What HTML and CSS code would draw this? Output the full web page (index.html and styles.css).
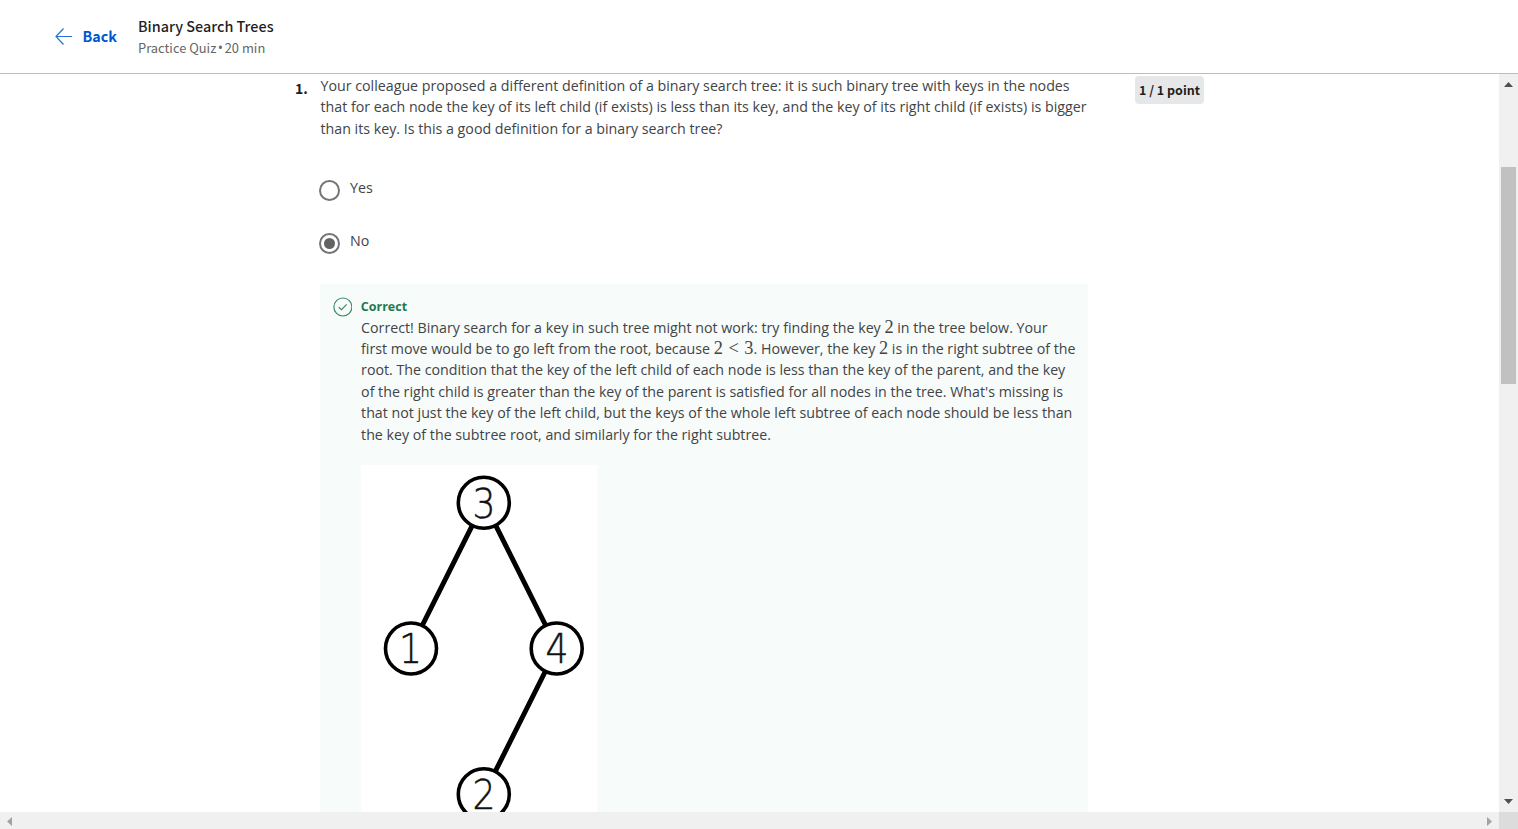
FILE: index.html
```
<!DOCTYPE html>
<html lang="en">
<head>
<meta charset="utf-8">
<title>Binary Search Trees</title>
<link rel="stylesheet" href="styles.css">
</head>
<body>
<header class="header">
  <a class="back"><svg class="back-arrow" width="18" height="18" viewBox="0 0 18 18"><path d="M17 8.500H1M8.500 0.500L1 8.500l7.500 8"/></svg><span>Back</span></a>
  <div class="heading">
    <h1 class="title">Binary Search Trees</h1>
    <p class="subtitle">Practice Quiz <span class="dot">•</span> 20 min</p>
  </div>
</header>
<div class="viewport">
  <main class="content">
    <div class="number">1.</div>
    <section class="question">
      <p class="prompt">Your colleague proposed a different definition of a binary search tree: it is such binary tree with keys in the nodes<br>that for each node the key of its left child (if exists) is less than its key, and the key of its right child (if exists) is bigger<br>than its key. Is this a good definition for a binary search tree?</p>
      <div class="options">
        <div class="option"><span class="radio"></span><span class="label">Yes</span></div>
        <div class="option"><span class="radio checked"></span><span class="label">No</span></div>
      </div>
      <div class="feedback">
        <svg class="check" width="20" height="20" viewBox="0 0 20 20"><circle cx="10" cy="10" r="9.1"/><path d="M5.800 10.200l2.800 2.500 5.200-5.400"/></svg>
        <div class="feedback-body">
          <h2 class="verdict">Correct</h2>
          <p class="explanation">Correct! Binary search for a key in such tree might not work: try finding the key <span class="math">2</span> in the tree below. Your<br>first move would be to go left from the root, because <span class="math">2 <span class="less">&lt;</span> 3</span>. However, the key <span class="math">2</span> is in the right subtree of the<br>root. The condition that the key of the left child of each node is less than the key of the parent, and the key<br>of the right child is greater than the key of the parent is satisfied for all nodes in the tree. What's missing is<br>that not just the key of the left child, but the keys of the whole left subtree of each node should be less than<br>the key of the subtree root, and similarly for the right subtree.</p>
          <svg class="tree" width="236" height="370" viewBox="0 0 236 370">
            <g class="edges"><path d="M123 37L50 183M123 37l73 146M196 183l-73 146"/></g>
            <g class="nodes"><circle cx="122.800" cy="37.800" r="25.500"/><circle cx="50" cy="183.500" r="25.500"/><circle cx="195.700" cy="183.500" r="25.500"/><circle cx="122.800" cy="329.300" r="25.500"/></g>
            <g class="keys"><text x="123" y="53" textLength="23" lengthAdjust="spacingAndGlyphs">3</text><text x="49.500" y="198" textLength="23" lengthAdjust="spacingAndGlyphs">1</text><text x="196" y="198" textLength="23" lengthAdjust="spacingAndGlyphs">4</text><text x="123" y="344" textLength="23" lengthAdjust="spacingAndGlyphs">2</text></g>
          </svg>
        </div>
      </div>
    </section>
    <div class="points">1 / 1 point</div>
  </main>
  <div class="vbar">
    <svg width="9" height="5" viewBox="0 0 9 5"><path d="M0 5L4.500 0 9 5z"/></svg>
    <div class="vtrack"><div class="thumb"></div></div>
    <svg width="9" height="5" viewBox="0 0 9 5"><path d="M0 0h9L4.500 5z"/></svg>
  </div>
  <div class="hbar">
    <svg width="5" height="9" viewBox="0 0 5 9"><path d="M5 0v9L0 4.500z"/></svg>
    <svg width="5" height="9" viewBox="0 0 5 9"><path d="M0 0v9l5-4.500z"/></svg>
  </div>
  <div class="corner"></div>
</div>
</body>
</html>
```
FILE: styles.css
```
* { box-sizing: border-box; }
body { margin: 0; height: 829px; display: flex; flex-direction: column; overflow: hidden; background: #fff; color: #414446; font: 14.22px/21.4px "Open Sans", sans-serif; }
h1, h2, p { margin: 0; }
.header { flex: none; height: 74px; border-bottom: 1px solid #bdbdbd; display: flex; padding-left: 55px; font-family: "Noto Sans CJK SC", sans-serif; }
.back { width: 83px; display: flex; align-items: center; gap: 9.5px; color: #0056d2; font-weight: 700; font-size: 14.3px; }
.back span { margin-top: -1px; }
.back-arrow { fill: none; stroke: #2a73cc; stroke-width: 1.2; }
.heading { padding-top: 15px; }
.title { font-size: 14.4px; line-height: 21px; font-weight: 500; color: #1f1f1f; }
.subtitle { padding-top: 1px; font-size: 12.9px; line-height: 21px; color: #666; white-space: nowrap; }
.dot { font: 14px/1 "Open Sans", sans-serif; margin: 0 -1.3px; }
.viewport { flex: 1; min-height: 0; display: grid; grid-template-columns: 1fr 19px; grid-template-rows: 1fr 17px; }
.content { min-height: 0; overflow: hidden; display: flex; align-items: flex-start; padding-left: 295px; }
.number { width: 25px; padding-top: 4px; font: 700 14px/21px "Noto Sans CJK SC", sans-serif; color: #1f1f1f; }
.question { width: 768px; flex: none; }
.prompt { padding: 1px 0 0 0.5px; white-space: nowrap; }
.options { padding-top: 40.3px; height: 145px; margin-left: -1px; }
.option { height: 53.4px; display: flex; gap: 10px; }
.radio { width: 21px; height: 21px; border: 2px solid #757575; border-radius: 50%; padding: 3px; }
.radio::after { content: ""; display: block; width: 11px; height: 11px; border-radius: 50%; }
.checked::after { background: #636363; }
.label { margin-top: -3px; }
.feedback { display: flex; height: 600px; padding: 13px 12.5px; background: #f7fbfa; gap: 8.5px; }
.check { fill: none; stroke: #3b8b67; stroke-width: 1.2; }
.feedback-body { white-space: nowrap; }
.verdict { font-size: 12.5px; line-height: 19px; color: #1f7a4d; }
.explanation { padding: 0.3px 0 0 0.3px; }
.math { font: 18.3px/1 "Liberation Serif", serif; }
.less { padding: 0 1px; }
.tree { display: block; margin-top: 19.7px; background: #fff; }
.edges { stroke: #000; stroke-width: 5; }
.nodes { fill: #fff; stroke: #000; stroke-width: 3.6; }
.keys { font: 200 40px "DejaVu Sans", sans-serif; text-anchor: middle; fill: #111; stroke: #111; stroke-width: 0.5; }
.points { margin: 2px 0 0 47px; width: 69px; height: 28px; border-radius: 4px; background: #e5e7e8; text-align: center; font: 700 12.5px/28px "Noto Sans CJK SC", sans-serif; color: #1f1f1f; white-space: nowrap; }
.vbar { background: #f0f0f0; display: flex; flex-direction: column; align-items: center; padding: 8px 0; fill: #505050; }
.vtrack { flex: 1; padding-top: 80px; }
.thumb { width: 15px; height: 217px; background: #c1c1c1; }
.hbar { background: #f0f0f0; display: flex; justify-content: space-between; align-items: center; padding: 1px 7px 0; fill: #a3a3a3; }
.corner { background: #dcdcdc; }
```
